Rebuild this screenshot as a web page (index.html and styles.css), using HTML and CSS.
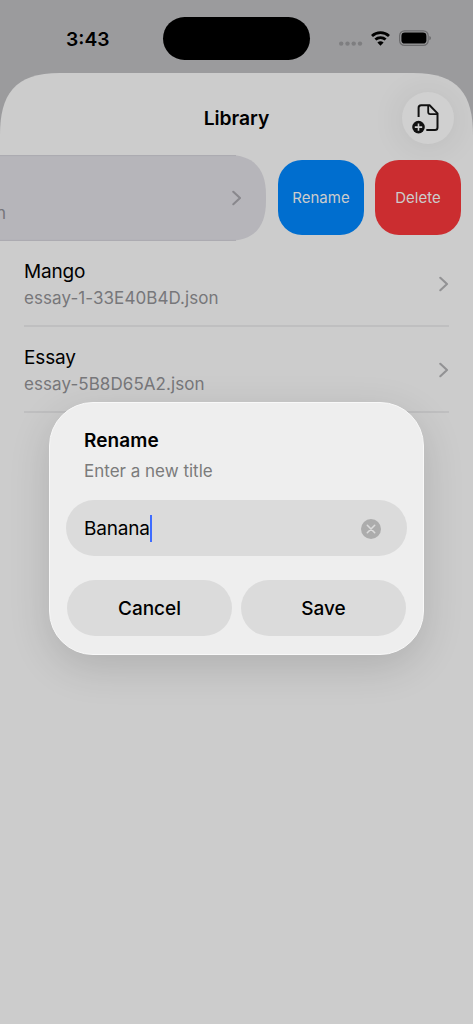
FILE: index.html
```html
<!DOCTYPE html>
<html lang="en">
<head>
<meta charset="utf-8">
<title>Library</title>
<link rel="stylesheet" href="styles.css">
</head>
<body>
<div class="screen">
  <header class="status">
    <span class="time">3:43</span>
    <span class="island"></span>
    <svg class="indicators" width="96" height="24" viewBox="0 0 96 24">
      <g fill="#7e7e80"><circle cx="3.2" cy="16.6" r="2.2"/><circle cx="9.5" cy="16.6" r="2.2"/><circle cx="15.7" cy="16.6" r="2.2"/><circle cx="22" cy="16.6" r="2.2"/></g>
      <g fill="none" stroke="#000" stroke-width="2.8"><path d="M34 8.9a12.4 12.4 0 0 1 17 0"/><path d="M37.4 12.6a7.4 7.4 0 0 1 10.2 0"/></g>
      <path d="M39.4 15.6a4.5 4.5 0 0 1 6.2 0L42.5 18.8Z"/>
      <rect x="61.6" y="3.8" width="28.6" height="14.6" rx="4.9" fill="none" stroke="#6b6b6d" stroke-width="1.2"/>
      <rect x="63.4" y="5.6" width="25" height="11" rx="3.4"/>
      <path d="M91.3 8.9q1.7.5 1.7 2.2t-1.7 2.2Z" fill="#6b6b6d"/>
    </svg>
  </header>
  <main class="sheet">
    <div class="titlebar">
      <h1 class="title">Library</h1>
      <button class="add" aria-label="Add document">
        <svg width="32" height="32" viewBox="0 0 32 32" fill="none">
          <path d="M7.6 15V5.8q0-2.6 2.6-2.6h8.4l7.9 8.1v14.2q0 2.6-2.6 2.6H15.3" stroke="#111" stroke-width="2"/>
          <path d="M17.2 3.4v6.6q0 2.1 2.1 2.1h6.9" stroke="#111" stroke-width="1.8"/>
          <circle cx="7.5" cy="25.1" r="6.3" fill="#111"/>
          <path d="M7.5 21.4v7.4M3.8 25.1h7.4" stroke="#d0d0d0" stroke-width="1.6"/>
        </svg>
      </button>
    </div>
    <div class="swipe">
      <svg class="swipe-bg" width="266" height="86" viewBox="0 0 266 86"><path d="M0 0H228C254 0 266 14 266 40V46C266 72 254 86 228 86H0Z" fill="#b6b5ba"/><path d="M0 .6H236M0 85.4H236" stroke="#acabb0"/></svg>
      <div class="swiped"><span class="tail">n</span><svg class="chev dark" width="10" height="16" viewBox="0 0 10 16"><path d="M1.3 1.8 8 8 1.3 14.2"/></svg></div>
      <button class="action blue">Rename</button>
      <button class="action red">Delete</button>
    </div>
    <div class="row"><div><p class="name mango">Mango</p><p class="file f1">essay-1-33E40B4D.json</p></div><svg class="chev" width="10" height="16" viewBox="0 0 10 16"><path d="M1.3 1.8 8 8 1.3 14.2"/></svg></div>
    <div class="row"><div><p class="name essay">Essay</p><p class="file f2">essay-5B8D65A2.json</p></div><svg class="chev" width="10" height="16" viewBox="0 0 10 16"><path d="M1.3 1.8 8 8 1.3 14.2"/></svg></div>
  </main>
  <section class="dialog">
    <h2 class="heading">Rename</h2>
    <p class="hint">Enter a new title</p>
    <div class="field"><span class="value">Banana</span><i class="caret"></i><svg class="clear" width="20" height="20" viewBox="0 0 20 20"><circle cx="10" cy="10" r="10" fill="#acacac"/><path d="m6.3 6.3 7.4 7.4m0-7.4-7.4 7.4" stroke="#dbdbdb" stroke-width="1.6" stroke-linecap="round"/></svg></div>
    <div class="buttons"><button class="btn cancel">Cancel</button><button class="btn save">Save</button></div>
  </section>
</div>
</body>
</html>
```
FILE: styles.css
```css
* { box-sizing: border-box; margin: 0; padding: 0; }
body { font-family: Inter, sans-serif; background: #9b9b9d; color: #000; }
button { border: 0; font-family: inherit; color: inherit; }
svg { display: block; }
.screen { position: relative; width: 473px; height: 1024px; overflow: hidden; background: #9b9b9d; display: flex; flex-direction: column; }
.status { height: 73px; flex: none; display: flex; padding-left: 66px; }
.time { width: 97px; padding-top: 26px; font-size: 19.3px; line-height: 26px; font-weight: 600; }
.island { width: 147px; height: 43px; margin-top: 17px; border-radius: 22px; background: #000; }
.indicators { margin: 27px 0 0 28px; }
.sheet { flex: 1; background: #ccc; clip-path: path("M0 62C0 22 14 0 60 0H413C459 0 473 22 473 62V951H0Z"); }
.titlebar { height: 82px; display: flex; align-items: center; padding: 8px 19px 0 71px; }
.title { flex: 1; text-align: center; font-size: 19.3px; line-height: 24px; font-weight: 600; letter-spacing: -.05px; }
.add { width: 52px; height: 52px; border-radius: 50%; background: #d0d0d0; box-shadow: 0 2px 34px rgba(0,0,0,.09); display: flex; align-items: flex-start; padding: 10px 0 0 9px; }
.swipe { position: relative; height: 86px; display: flex; align-items: center; gap: 12px; }
.swipe-bg { position: absolute; left: 0; top: 0; }
.swiped { position: relative; width: 266px; height: 86px; display: flex; align-items: center; justify-content: space-between; padding-right: 24px; }
.tail { font-size: 17px; line-height: 22px; color: #77767b; margin: 29px 0 0 -4px; }
.chev { fill: none; stroke: #929294; stroke-width: 2.1; stroke-linecap: round; stroke-linejoin: round; }
.row .chev { margin-top: 2px; }
.dark { stroke: #89888d; }
.action { width: 86px; height: 75px; border-radius: 24px; margin-bottom: 1px; font-size: 15px; color: #ccc; text-align: center; }
.blue { background: #006ecf; }
.red { background: #cb2d30; margin-left: -1px; }
.row { height: 86px; margin: 0 24px; border-bottom: 2px solid #bfbfc0; display: flex; align-items: center; justify-content: space-between; }
.name { font-size: 19px; line-height: 26px; letter-spacing: -.15px; padding-top: 2px; }
.file { font-size: 17px; line-height: 22px; color: #77777a; margin-top: 2px; letter-spacing: .07px; }
.dialog { position: absolute; left: 49px; top: 402px; width: 375px; height: 253px; border-radius: 44px; background: #eee; border: 1px solid #f8f8f8; box-shadow: 0 12px 42px rgba(0,0,0,.14); padding: 25px 17px 0; }
.heading { font-size: 19px; line-height: 25px; font-weight: 600; padding-left: 17px; letter-spacing: .1px; }
.hint { font-size: 17px; line-height: 24px; color: #7b7b7b; padding-left: 17px; margin-top: 6px; }
.field { height: 56px; margin: 17px -1px 0; border-radius: 28px; background: #dbdbdb; display: flex; align-items: center; padding: 0 26px 0 18px; }
.value { font-size: 19px; letter-spacing: -.2px; padding-top: 1px; }
.caret { width: 2px; height: 27px; background: #3e6cff; }
.clear { margin: 1px 0 0 auto; }
.buttons { display: flex; gap: 9px; margin-top: 24px; }
.btn { flex: 1; height: 56px; border-radius: 28px; background: #dbdbdb; font-size: 19px; font-weight: 500; }
```
